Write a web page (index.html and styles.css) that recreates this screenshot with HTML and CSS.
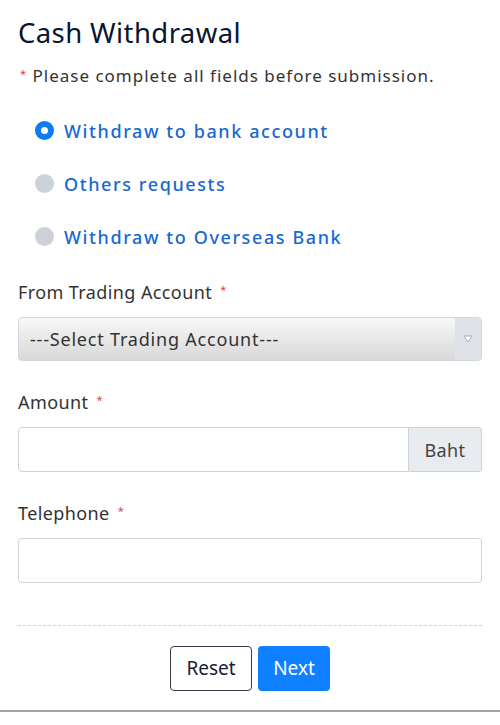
FILE: index.html
```html
<!DOCTYPE html>
<html lang="en">
<head>
  <meta charset="UTF-8">
  <meta name="viewport" content="width=device-width, initial-scale=1.0">
  <title>Cash Withdrawal</title>
  <link rel="stylesheet" href="styles.css">
</head>
<body>
  <div class="page">
    <h1 class="title">Cash Withdrawal</h1>
    <p class="note"><span class="req">*</span> Please complete all fields before submission.</p>

    <div class="radio-group">
      <label class="radio-row">
        <span class="radio checked"></span>
        <span class="radio-text">Withdraw to bank account</span>
      </label>
      <label class="radio-row">
        <span class="radio"></span>
        <span class="radio-text">Others requests</span>
      </label>
      <label class="radio-row">
        <span class="radio"></span>
        <span class="radio-text">Withdraw to Overseas Bank</span>
      </label>
    </div>

    <div class="form-group">
      <label class="field-label">From Trading Account <span class="req">*</span></label>
      <div class="select">
        <span class="select-text">---Select Trading Account---</span>
        <span class="select-arrow">
          <svg width="10" height="8" viewBox="0 0 10 8">
            <path d="M1 1 L9 1 L5 7 Z" fill="#fff" stroke="#a9adb5" stroke-width="1"/>
          </svg>
        </span>
      </div>
    </div>

    <div class="form-group">
      <label class="field-label">Amount <span class="req">*</span></label>
      <div class="input-group">
        <input class="input" type="text">
        <span class="addon">Baht</span>
      </div>
    </div>

    <div class="form-group">
      <label class="field-label">Telephone <span class="req">*</span></label>
      <input class="input full" type="text">
    </div>

    <div class="actions">
      <button class="btn btn-reset">Reset</button>
      <button class="btn btn-next">Next</button>
    </div>
  </div>
  <div class="bottom-line"></div>
</body>
</html>
```

FILE: styles.css
```css
body {
  margin: 0;
  font-family: "Noto Sans", "DejaVu Sans", sans-serif;
  background: #fff;
  color: #333;
}
.page {
  padding: 16px 18px 0 18px;
}
.title {
  margin: 0;
  font-size: 27.5px;
  line-height: 34px;
  font-weight: 400;
  color: #0b1530;
  letter-spacing: 0.4px;
}
.note {
  margin: 14px 0 0 2px;
  font-size: 17px;
  line-height: 24px;
  color: #333;
  letter-spacing: 1px;
}
.req {
  color: #e0404a;
  font-size: 11px;
  vertical-align: top;
  position: relative;
  top: -2px;
  margin-left: 3px;
}
.note .req {
  margin-left: 0;
}
.radio-group {
  margin-top: 16px;
  padding-left: 17px;
}
.radio-row {
  display: flex;
  align-items: center;
  height: 53px;
}
.radio {
  width: 19px;
  height: 19px;
  border-radius: 50%;
  background: #cdd1d9;
  margin-right: 10px;
  box-sizing: border-box;
}
.radio.checked {
  background: #fff;
  border: 6px solid #0d7bf2;
}
.radio-text {
  font-size: 18px;
  font-weight: 500;
  color: #1768d2;
  letter-spacing: 1.6px;
}
.form-group {
  margin-top: 17px;
}
.form-group + .form-group {
  margin-top: 29px;
}
.field-label {
  display: block;
  font-size: 18px;
  line-height: 24px;
  color: #333;
  margin-bottom: 13px;
  letter-spacing: 0.4px;
}
.select {
  display: flex;
  height: 44px;
  border-radius: 4px;
  border: 1px solid #d3d6db;
  box-sizing: border-box;
  background: linear-gradient(#f8f8f8, #d8d8d8);
  overflow: hidden;
}
.select-text {
  flex: 1;
  display: flex;
  align-items: center;
  padding-left: 11px;
  font-size: 18px;
  color: #333;
  letter-spacing: 0.8px;
}
.select-arrow {
  width: 26px;
  display: flex;
  align-items: center;
  justify-content: center;
  background: #dfe2e8;
}
.input-group {
  display: flex;
  height: 45px;
}
.input {
  height: 45px;
  box-sizing: border-box;
  border: 1px solid #ced2d8;
  border-radius: 4px;
  font-size: 18px;
  padding: 0 12px;
  outline: none;
}
.input-group .input {
  flex: 1;
  min-width: 0;
  border-radius: 4px 0 0 4px;
}
.input.full {
  display: block;
  width: 100%;
}
.addon {
  width: 73px;
  box-sizing: border-box;
  display: flex;
  align-items: center;
  justify-content: center;
  background: #e9ecef;
  border: 1px solid #ced2d8;
  border-left: none;
  border-radius: 0 4px 4px 0;
  font-size: 18px;
  color: #444;
  letter-spacing: 0.4px;
}
.actions {
  margin-top: 42px;
  border-top: 1px dashed #cfd2d6;
  padding: 20px 0 19px;
  display: flex;
  justify-content: center;
  gap: 6px;
}
.btn {
  height: 45px;
  font-family: inherit;
  font-size: 19px;
  border-radius: 4px;
  padding: 0 0 2px;
  cursor: pointer;
}
.btn-reset {
  width: 82px;
  background: #fff;
  border: 1.5px solid #333d4f;
  color: #1a2033;
}
.btn-next {
  width: 72px;
  background: #0f80ff;
  border: none;
  color: #fff;
}
.bottom-line {
  height: 2px;
  background: #a6a6a6;
}
```
